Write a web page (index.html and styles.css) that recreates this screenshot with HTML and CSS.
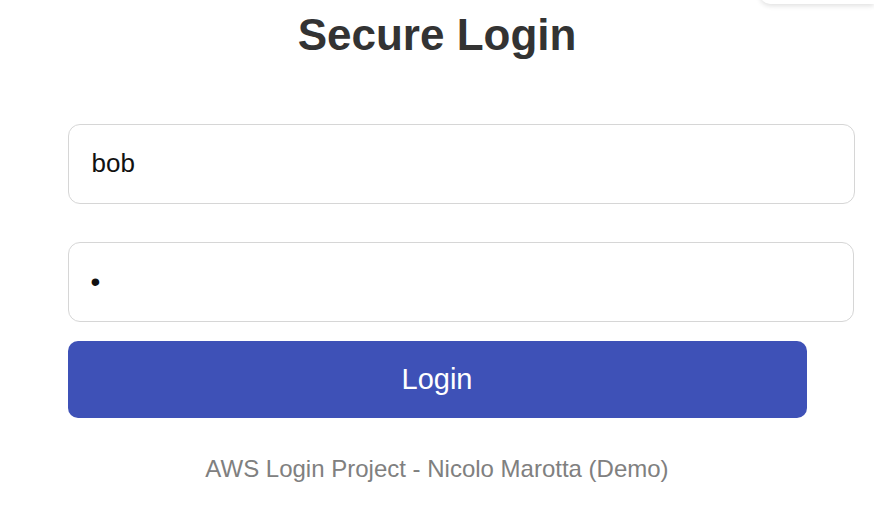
FILE: index.html
```html
<!DOCTYPE html>
<html lang="en">
<head>
    <meta charset="UTF-8">
    <meta name="viewport" content="width=device-width, initial-scale=1.0">
    <title>Secure Login</title>
    <link rel="stylesheet" href="styles.css">
</head>
<body>
    <div class="top-shadow"></div>

    <div class="login-container">
        <h1>Secure Login</h1>

        <form class="login-form" onsubmit="return false;">
            <input type="text" class="field" value="bob">
            <input type="password" class="field" value="x">
            <button type="submit" class="login-btn">Login</button>
        </form>

        <p class="footer">AWS Login Project - Nicolo Marotta (Demo)</p>
    </div>
</body>
</html>
```

FILE: styles.css
```css
body {
    font-family: "Liberation Sans", Arial, sans-serif;
    background-color: #fff;
    margin: 0;
}

/* faint edge of something sitting above the page */
.top-shadow {
    position: absolute;
    top: -20px;
    right: 0;
    width: 114px;
    height: 24px;
    background: #fff;
    border-radius: 0 0 0 10px;
    box-shadow: 0 2px 5px rgba(0,0,0,0.12);
}

.login-container {
    width: 739px;
    margin: 0 auto;
    text-align: center;
}

h1 {
    color: #333;
    font-size: 44px;
    margin: 0;
    padding-top: 11px;
    line-height: 48px;
}

.login-form {
    margin-top: 65px;
}

.field {
    display: block;
    width: 739px;
    padding: 23px 23px 24px 23px;
    margin: 0 0 38px 0;
    font-family: inherit;
    font-size: 26px;
    line-height: 31px;
    color: #111;
    border: 1px solid #d6d6d6;
    border-radius: 12px;
    background: #fff;
    outline: none;
}

.field + .field {
    margin-bottom: 19px;
}

.field[type="password"] {
    font-size: 28px;
    line-height: 31px;
    padding-left: 22px;
}

.login-btn {
    display: block;
    width: 100%;
    height: 77px;
    font-family: inherit;
    font-size: 29px;
    color: #fff;
    background-color: #3e51b7;
    border: none;
    border-radius: 10px;
    cursor: pointer;
}

.footer {
    margin: 37px 0 0 0;
    font-size: 24px;
    color: #808080;
}
```
